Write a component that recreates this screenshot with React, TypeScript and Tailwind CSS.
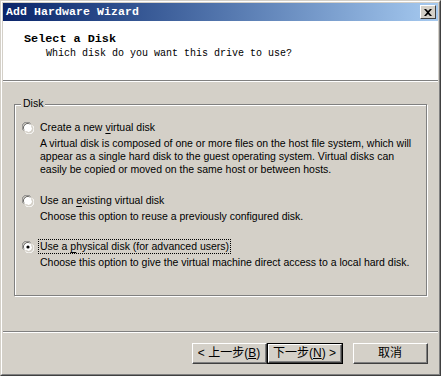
import React from "react";

const mono = "font-['Liberation_Mono',monospace]";
const sans = "font-['Liberation_Sans',Arial,sans-serif]";
const cjk = "font-['Liberation_Sans','Noto_Sans_CJK_SC',sans-serif]";

const Radio: React.FC<{ checked?: boolean }> = ({ checked }) => (
  <svg width="12" height="12" viewBox="0 0 12 12" className="shrink-0">
    <path d="M1.5 8.5 A4.5 4.5 0 0 1 8.5 1.5" fill="none" stroke="#808080" strokeWidth="1" />
    <path d="M2.8 8.2 A3.5 3.5 0 0 1 8.2 2.8" fill="none" stroke="#404040" strokeWidth="1" />
    <circle cx="6" cy="6" r="4" fill="#ffffff" />
    <path d="M10.5 3.5 A4.5 4.5 0 0 1 3.5 10.5" fill="none" stroke="#ffffff" strokeWidth="1" />
    <path d="M9.4 4.2 A3.5 3.5 0 0 1 4.2 9.4" fill="none" stroke="#d4d0c8" strokeWidth="1" />
    {checked && <circle cx="6" cy="6" r="1.6" fill="#000000" />}
  </svg>
);

const Option: React.FC<{
  pre: string;
  key_: string;
  post: string;
  checked?: boolean;
  focus?: boolean;
  lines: string[];
  className?: string;
}> = ({ pre, key_, post, checked, focus, lines, className }) => (
  <div className={className}>
    <div className="flex items-center h-[13px]">
      <Radio checked={checked} />
      <span
        className={`ml-[5px] px-[1px] leading-[13px] whitespace-nowrap ${
          focus ? "outline outline-1 outline-dotted outline-black" : ""
        }`}
      >
        {pre}
        <span className="underline underline-offset-2">{key_}</span>
        {post}
      </span>
    </div>
    <div className="pl-[18px] mt-[3px] leading-[13px] whitespace-nowrap">
      {lines.map((l, i) => (
        <div key={i}>{l}</div>
      ))}
    </div>
  </div>
);

const Button: React.FC<{ children: React.ReactNode; primary?: boolean }> = ({ children, primary }) => (
  <div className={primary ? "border border-black" : ""}>
    <div
      className={`flex items-center justify-center bg-[#d4d0c8] border-t border-l border-t-white border-l-white border-b border-r border-b-[#404040] border-r-[#404040] ${
        primary ? "w-[74px] h-[19px]" : "w-[75px] h-[21px]"
      }`}
    >
      <div className="w-full h-full flex items-center justify-center border-b border-r border-b-[#808080] border-r-[#808080] text-[12px] text-black whitespace-nowrap">
        {children}
      </div>
    </div>
  </div>
);

export default function App() {
  return (
    <div className="w-[441px] h-[376px] bg-white">
      <div className="w-full h-full border-t border-l border-t-[#d4d0c8] border-l-[#d4d0c8] border-b border-r border-b-[#404040] border-r-[#404040]">
        <div className="w-full h-full border-t border-l border-t-white border-l-white border-b border-r border-b-[#808080] border-r-[#808080] bg-[#d4d0c8] p-[1px] flex flex-col">
          {/* title bar */}
          <div className="h-[18px] flex items-center justify-between bg-gradient-to-r from-[#0a246a] to-[#a6caf0] pl-[3px] pr-[2px]">
            <span className={`${mono} text-[11.5px] font-bold text-white leading-none tracking-[0.1px]`}>
              Add Hardware Wizard
            </span>
            <div className="w-[16px] h-[14px] bg-[#d4d0c8] border-t border-l border-t-white border-l-white border-b border-r border-b-[#404040] border-r-[#404040] flex items-center justify-center">
              <svg width="8" height="7" viewBox="0 0 8 7">
                <path d="M0 0 L2 0 L4 2 L6 0 L8 0 L5 3.5 L8 7 L6 7 L4 5 L2 7 L0 7 L3 3.5 Z" fill="#000" />
              </svg>
            </div>
          </div>

          {/* header */}
          <div className="h-[59px] bg-white pl-[21px] pt-[11px]">
            <div className={`${mono} text-[11.8px] font-bold text-black leading-[14px]`}>Select a Disk</div>
            <div className={`${mono} text-[10px] text-black leading-[14px] pl-[22px] mt-[1px]`}>
              Which disk do you want this drive to use?
            </div>
          </div>
          <div className="h-[1px] bg-[#808080]" />
          <div className="h-[1px] bg-white" />

          {/* body */}
          <div className={`flex-1 flex flex-col ${sans} text-[10.5px] text-black`}>
            <div className="mx-[11px] mt-[22px] relative h-[192px] border border-[#808080] shadow-[inset_1px_1px_0_#ffffff,1px_1px_0_#ffffff]">
              <span className="absolute left-[6px] -top-[8px] bg-[#d4d0c8] px-[2px] leading-[13px]">Disk</span>
              <div className="pl-[7px] pt-[16px]">
                <Option
                  pre="Create a new "
                  key_="v"
                  post="irtual disk"
                  lines={[
                    "A virtual disk is composed of one or more files on the host file system, which will",
                    "appear as a single hard disk to the guest operating system. Virtual disks can",
                    "easily be copied or moved on the same host or between hosts.",
                  ]}
                />
                <Option
                  className="mt-[18px]"
                  pre="Use an "
                  key_="e"
                  post="xisting virtual disk"
                  lines={["Choose this option to reuse a previously configured disk."]}
                />
                <Option
                  className="mt-[17px]"
                  pre="Use a "
                  key_="p"
                  post="hysical disk (for advanced users)"
                  checked
                  focus
                  lines={["Choose this option to give the virtual machine direct access to a local hard disk."]}
                />
              </div>
            </div>

            <div className="flex-1" />
            <div className="h-[1px] bg-[#808080]" />
            <div className="h-[1px] bg-white" />
            <div className={`flex items-start h-[40px] pt-[10px] pl-[189px] ${cjk}`}>
              <Button>
                &lt; 上一步(<span className="underline">B</span>)
              </Button>
              <Button primary>
                下一步(<span className="underline">N</span>) &gt;
              </Button>
              <div className="w-[10px]" />
              <Button>取消</Button>
            </div>
          </div>
        </div>
      </div>
    </div>
  );
}
